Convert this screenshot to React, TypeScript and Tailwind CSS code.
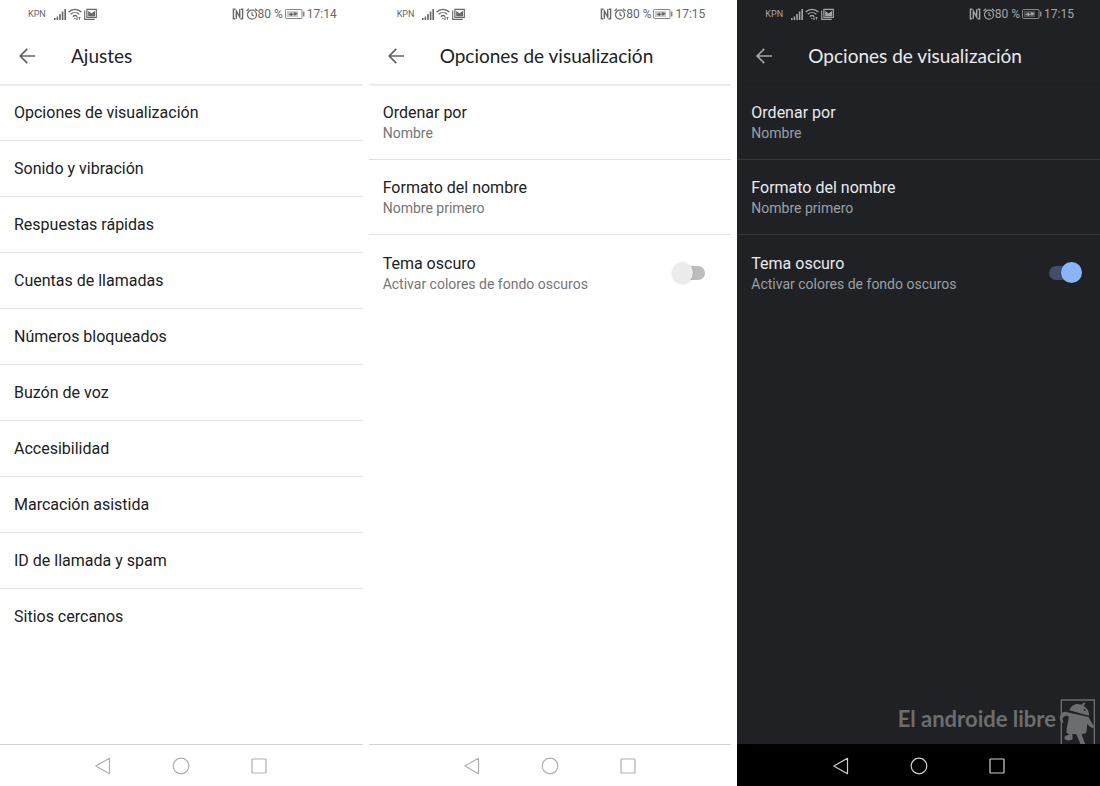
import React, { useId, useState } from 'react';
import { clsx } from 'clsx';

type Theme = 'light' | 'dark';

interface ThemeProps {
    theme: Theme;
}

const SETTINGS = [
    'Opciones de visualización',
    'Sonido y vibración',
    'Respuestas rápidas',
    'Cuentas de llamadas',
    'Números bloqueados',
    'Buzón de voz',
    'Accesibilidad',
    'Marcación asistida',
    'ID de llamada y spam',
    'Sitios cercanos',
];

const SignalIcon = () => (
    <svg className="h-3 w-3" viewBox="0 0 12 12" fill="currentColor" aria-hidden="true">
        <path d="M0 10h1.6v2H0zM2.6 8.5h1.6V12H2.6zM5.2 6h1.600v6H5.200zM7.800 3.500h1.600V12H7.800zM10.400 1H12v11h-1.600z" />
    </svg>
);

const WifiIcon = () => (
    <svg className="h-3 w-[14px]" viewBox="0 0 14 12" fill="none" stroke="currentColor" strokeWidth="1.2" aria-hidden="true">
        <path d="M.6 4C4.200.4 9.800.4 13.400 4M2.700 6.300c2.500-2.400 6.100-2.400 8.600 0M4.800 8.600c1.300-1.300 3.100-1.300 4.400 0" />
        <path d="M6 10.600h1.500M9 8.800v2.800M8 10.600l1 1 1-1M11.500 11.700V9M10.500 10l1-1 1 1" strokeWidth=".9" />
    </svg>
);

const MailIcon = () => (
    <svg className="h-3 w-[13px]" viewBox="0 0 13 12" aria-hidden="true">
        <path d="M.7 2.500v8.900h10" fill="none" stroke="currentColor" strokeWidth="1.100" />
        <path d="M2.900 1.300h9.400v8.200H2.900z" fill="none" stroke="currentColor" strokeWidth="1.200" />
        <path d="M4.200 8.400V2.800l3.400 2.700L11 2.800v5.600z" fill="currentColor" />
    </svg>
);

const NfcIcon = () => (
    <svg className="h-3 w-3" viewBox="0 0 12 12" fill="none" stroke="currentColor" aria-hidden="true">
        <path d="M3.200 1.200H1.400v9.600h1.800M8.800 1.200h1.800v9.600H8.800" strokeWidth="1.400" />
        <path d="M4.300 10.800V3l3.400 6V1.200" strokeWidth="1.400" />
    </svg>
);

const AlarmIcon = () => (
    <svg className="h-3 w-3" viewBox="0 0 12 12" fill="none" stroke="currentColor" strokeWidth="1.200" aria-hidden="true">
        <circle cx="6" cy="6.700" r="4.500" />
        <path d="M6 4v2.900l1.800 1.200M.5 3l2.500-2.200M11.500 3L9 .8" />
    </svg>
);

const BatteryIcon = () => (
    <svg className="h-3 w-5" viewBox="0 0 20 12" aria-hidden="true">
        <rect x=".5" y="1.500" width="16.500" height="9" rx="1" fill="none" stroke="currentColor" strokeWidth=".8" />
        <path d="M2 3h11v6H2z" fill="currentColor" opacity=".35" />
        <path d="M3.500 6.300l3.500-1.800v1.200h2V4l4 1.600-3.500 2.100V6.800H7v1.400z" fill="currentColor" />
        <path d="M18.200 3.500h1.200v5h-1.200z" fill="currentColor" />
    </svg>
);

const BackArrow = () => (
    <svg className="h-4 w-4" viewBox="0 0 16 16" fill="none" stroke="currentColor" strokeWidth="1.700" aria-hidden="true">
        <path d="M16 8H1.300M8.300.8L1.200 8l7.100 7.200" />
    </svg>
);

const WalkingRobot = () => (
    <svg className="h-12 w-10" viewBox="0 0 120 144" fill="currentColor" aria-hidden="true">
        <path d="M16 144V12h99v132" fill="none" stroke="currentColor" strokeWidth="4" />
        <path d="M40 43C46 26 61 20 77 26l7-7 4 3-5 8c12 7 17 17 16 29z" />
        <path d="M27 47l71 16c3 10 10 17 17 29l-5 5c-8-4-12-9-17-13 0 10 0 18-3 27l-13 4 10 29c-4 4-11 3-14-1l-12-28-12-1 1 16c-8 5-20 4-24-1-2-8 4-13 14-12l-9-9c1-18 7-31 7-47-7-4-15-1-18 6-2 5 3 7 2 14-9-2-12-10-10-18 2-10 8-16 15-16z" />
        <circle cx="86" cy="42" r="3" fill="#202124" />
    </svg>
);

const StatusBar: React.FC<{ time: string; theme: Theme }> = ({ time, theme }) => (
    <div className={clsx('flex h-7 items-center justify-between pl-7 pr-[26px] text-xs', theme === 'dark' ? 'text-[#a5a6a8]' : 'text-[#666666]')}>
        <div className="flex items-center gap-0.5">
            <span className="mr-1.5 text-[9px]">KPN</span>
            <SignalIcon />
            <WifiIcon />
            <MailIcon />
        </div>
        <div className="flex items-center gap-0.5">
            <NfcIcon />
            <div className="flex items-center">
                <AlarmIcon />
                <span>80 %</span>
            </div>
            <BatteryIcon />
            <span>{time}</span>
        </div>
    </div>
);

const NavBar: React.FC<ThemeProps> = ({ theme }) => (
    <nav
        className={clsx(
            'flex h-[42px] items-center justify-center gap-[60px] border-t',
            theme === 'dark' ? 'border-black bg-black text-[#d0d0d0]' : 'border-[#d2d2d2] text-[#b0b0b0]',
        )}
    >
        <button type="button" aria-label="Atrás">
            <svg className="h-[18px] w-[18px]" viewBox="0 0 18 18" fill="none" stroke="currentColor" strokeWidth="1.200" strokeLinejoin="round">
                <path d="M15.500 1.300v15.400L1.800 9z" />
            </svg>
        </button>
        <button type="button" aria-label="Inicio">
            <svg className="h-[18px] w-[18px]" viewBox="0 0 18 18" fill="none" stroke="currentColor" strokeWidth="1.200">
                <circle cx="9" cy="9" r="7.800" />
            </svg>
        </button>
        <button type="button" aria-label="Recientes">
            <svg className="h-[18px] w-[18px]" viewBox="0 0 18 18" fill="none" stroke="currentColor" strokeWidth="1.200">
                <rect x="2" y="2" width="14" height="14" rx=".5" />
            </svg>
        </button>
    </nav>
);

interface PhoneProps extends ThemeProps {
    time: string;
    title: string;
    children: React.ReactNode;
}

const Phone: React.FC<PhoneProps> = ({ time, title, theme, children }) => (
    <section className={clsx('flex flex-col', theme === 'dark' ? 'bg-[#202124] text-[#e8eaed]' : 'bg-white text-[#202124]')}>
        <StatusBar time={time} theme={theme} />
        <header
            className={clsx(
                'flex h-[57px] items-center gap-9 border-b pl-[19px]',
                theme === 'dark' ? 'border-[#1d1e21]' : 'border-[#e8e8e8] shadow-[0_1px_0_#f0f0f0]',
            )}
        >
            <button type="button" aria-label="Volver" className={theme === 'dark' ? 'text-[#a5a6a8]' : 'text-[#5f6368]'}>
                <BackArrow />
            </button>
            <h1 className="font-[Lato,sans-serif] text-[19px]">{title}</h1>
        </header>
        {children}
        <NavBar theme={theme} />
    </section>
);

const DisplayOptions: React.FC<ThemeProps> = ({ theme }) => {
    const id = useId();
    const [enabled, setEnabled] = useState(theme === 'dark');

    const divider = theme === 'dark' ? 'border-[#36373a]' : 'border-[#e0e0e0]';
    const subtitle = clsx('block text-sm leading-5', theme === 'dark' ? 'text-[#9aa0a6]' : 'text-[#757575]');
    const row = 'h-[75px] w-full pl-[14px] text-left';

    return (
        <main className="flex-1">
            <button type="button" className={clsx(row, 'border-b pt-0.5', divider)}>
                <span className="block text-base leading-5">Ordenar por</span>
                <span className={subtitle}>Nombre</span>
            </button>
            <button type="button" className={clsx(row, 'border-b pt-0.5', divider)}>
                <span className="block text-base leading-5">Formato del nombre</span>
                <span className={subtitle}>Nombre primero</span>
            </button>
            <div className={clsx(row, 'flex items-center justify-between pr-[18px]')}>
                <label htmlFor={id} className="pt-0.5">
                    <span className="block text-base leading-5">Tema oscuro</span>
                    <span className={subtitle}>Activar colores de fondo oscuros</span>
                </label>
                <span className="relative flex h-[21px] w-[41px] items-center px-2">
                    <input
                        id={id}
                        type="checkbox"
                        role="switch"
                        checked={enabled}
                        onChange={(e) => setEnabled(e.target.checked)}
                        className={clsx('h-[14px] w-full appearance-none rounded-full', enabled ? 'bg-[#414f6b]' : 'bg-[#bdbdbd]')}
                    />
                    <span
                        className={clsx(
                            'pointer-events-none absolute top-0 h-[21px] w-[21px] rounded-full shadow-sm',
                            enabled ? 'right-0 bg-[#8ab4f8]' : 'left-0 bg-[#ececec]',
                        )}
                    />
                </span>
            </div>
        </main>
    );
};

const App: React.FC = () => {
    return (
        <div className="grid min-h-screen grid-cols-3 gap-[6px] bg-white font-[Roboto,sans-serif]">
            <Phone time="17:14" title="Ajustes" theme="light">
                <main className="flex-1">
                    <ul>
                        {SETTINGS.map((item) => (
                            <li key={item} className="border-b border-[#e0e0e0] last:border-b-0">
                                <button type="button" className="block h-[55px] w-full pl-[14px] text-left text-base">
                                    {item}
                                </button>
                            </li>
                        ))}
                    </ul>
                </main>
            </Phone>
            <Phone time="17:15" title="Opciones de visualización" theme="light">
                <DisplayOptions theme="light" />
            </Phone>
            <Phone time="17:15" title="Opciones de visualización" theme="dark">
                <DisplayOptions theme="dark" />
                <footer className="flex items-center justify-end pr-1 text-[#6c6d6f]">
                    <span className="pb-1 font-[Lato,sans-serif] text-[22px] font-bold">El androide libre</span>
                    <WalkingRobot />
                </footer>
            </Phone>
        </div>
    );
};

export default App;
